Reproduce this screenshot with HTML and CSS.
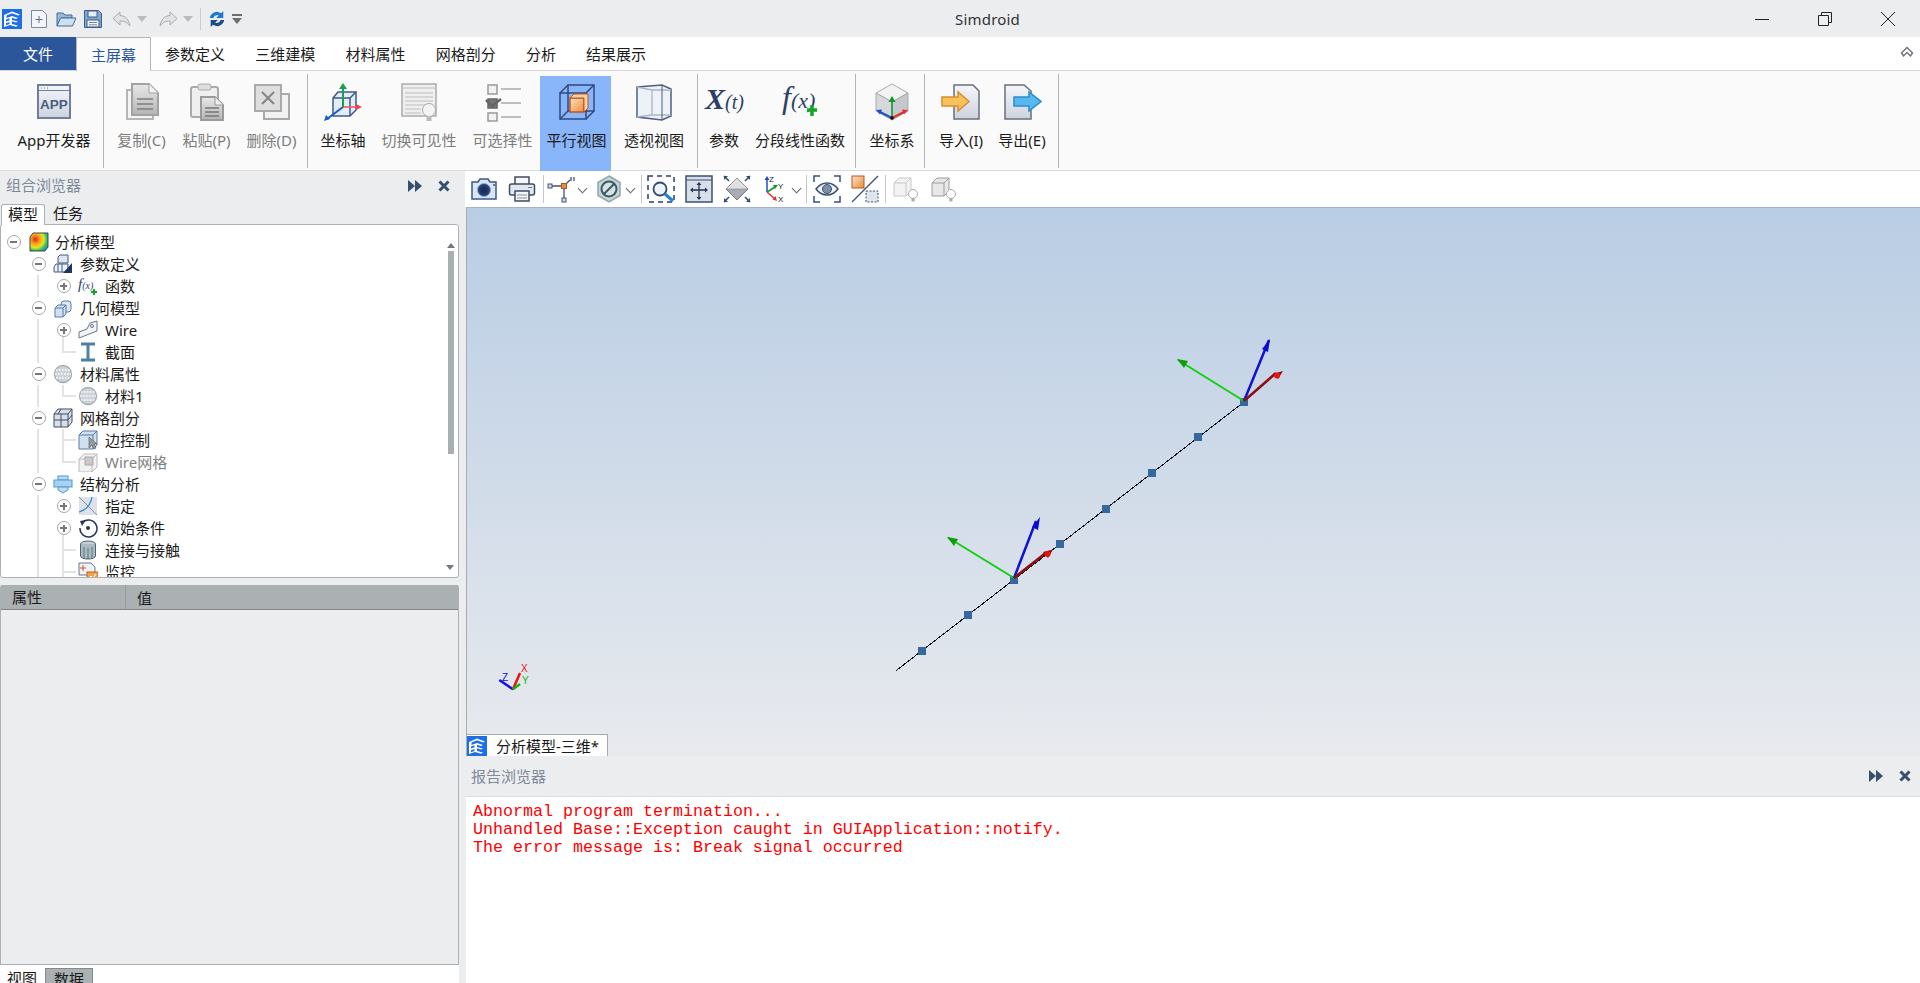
FILE: index.html
```html
<!DOCTYPE html>
<html lang="zh-CN">
<head>
<meta charset="utf-8">
<title>Simdroid</title>
<link rel="stylesheet" href="styles.css">
</head>
<body>
<svg class="defs" aria-hidden="true">
  <defs>
    <linearGradient id="gSheet" x1="0" y1="0" x2="0" y2="1"><stop offset="0" stop-color="#f4f6fa"/><stop offset="1" stop-color="#cdd3de"/></linearGradient>
    <linearGradient id="gGrey" x1="0" y1="0" x2="0" y2="1"><stop offset="0" stop-color="#e8e8e8"/><stop offset="1" stop-color="#b4b4b4"/></linearGradient>
    <linearGradient id="gOrange" x1="0" y1="0" x2="1" y2="1"><stop offset="0" stop-color="#fbe3c4"/><stop offset="1" stop-color="#ec8b3c"/></linearGradient>
    <radialGradient id="gHeat" cx="0.3" cy="0.35" r="0.85"><stop offset="0" stop-color="#e8201c"/><stop offset="0.3" stop-color="#f7a11a"/><stop offset="0.55" stop-color="#e5e51e"/><stop offset="0.75" stop-color="#2fc45a"/><stop offset="1" stop-color="#1f7fe0"/></radialGradient>
    <symbol id="logo" viewBox="0 0 20 20"><rect width="20" height="20" fill="#1e6fe3"/><path d="M2 6 10 2.500l8 3-2 1-6-2.200-5.500 2.200V9l5.500-2 6 2-2 1-4-1.300V11l6 1.500-2 1-4-1.200V15l6 1.500-2 1.200-6-1.700-6 2V6zm2 4.500v2l3.500-1.200v-2zm0 3.800v2l3.500-1.200v-2z" fill="#fff"/></symbol>
    <symbol id="q-new" viewBox="0 0 20 20"><path d="M2.500 1.500h11l4 4v13h-15z" fill="#f3f5f9" stroke="#7b8aa3"/><path d="M10 7v7M6.500 10.500h7" stroke="#5f6f88" fill="none"/></symbol>
    <symbol id="q-open" viewBox="0 0 20 20"><path d="M1 17V4h6l2 2h7v3H5L1 17z" fill="#9ab8d8" stroke="#3f6e9c"/><path d="M1 17 4.500 9H20l-3.500 8z" fill="#cfe0f1" stroke="#3f6e9c"/></symbol>
    <symbol id="q-save" viewBox="0 0 20 20"><path d="M1.500 1.500h14l3 3v14h-17z" fill="#7fa8cf" stroke="#3f5f86"/><rect x="5" y="2" width="9" height="6" fill="#e6edf5" stroke="#3f5f86"/><rect x="4" y="11" width="12" height="7" fill="#f2f4f7" stroke="#3f5f86"/><path d="M6 13.500h8M6 15.800h8" stroke="#7b8aa3"/></symbol>
    <symbol id="q-undo" viewBox="0 0 20 20"><path d="M8 3 1 9.500 8 16v-4c4 0 7 1 10 5-1-6-4-10-10-10.500z" fill="#e2e3e6" stroke="#a8abb0"/></symbol>
    <symbol id="q-redo" viewBox="0 0 20 20"><path d="M12 3l7 6.500L12 16v-4c-4 0-7 1-10 5 1-6 4-10 10-10.500z" fill="#e2e3e6" stroke="#a8abb0"/></symbol>
    <symbol id="q-sync" viewBox="0 0 20 20"><path d="M2 9a8 8 0 0 1 12.500-5.500L17 1v8H9l3-3A4.500 4.500 0 0 0 6 9z" fill="#1c78d0"/><path d="M18 11a8 8 0 0 1-12.500 5.500L3 19v-8h8l-3 3a4.500 4.500 0 0 0 6-3z" fill="#1f4c86"/></symbol>

    <symbol id="r-app" viewBox="0 0 40 40"><rect x="4" y="3" width="32" height="33" fill="url(#gSheet)" stroke="#6f7e99" stroke-width="2"/><path d="M4 8.500h32" stroke="#6f7e99"/><path d="M7 6h1M10 6h1M13 6h1" stroke="#6f7e99"/><text x="20" y="27" class="svg-app">APP</text></symbol>
    <symbol id="r-copy" viewBox="0 0 40 40"><rect x="5" y="8" width="26" height="29" fill="#f4f4f4" stroke="#b5b5b5" stroke-width="2"/><path d="M10 2h17l9 9v22H10z" fill="url(#gGrey)" stroke="#a2a2a2" stroke-width="2"/><path d="M27 2v9h9" fill="#f2f2f2" stroke="#a2a2a2"/><path d="M15 17h16M15 22h16M15 27h16" stroke="#7d7d7d" stroke-width="1.500"/></symbol>
    <symbol id="r-paste" viewBox="0 0 40 40"><rect x="4" y="5" width="27" height="30" rx="2" fill="#efefef" stroke="#aaa" stroke-width="2"/><rect x="11" y="2" width="13" height="6" rx="2" fill="#ddd" stroke="#aaa"/><path d="M14 15h14l8 8v15H14z" fill="url(#gGrey)" stroke="#9a9a9a" stroke-width="2"/><path d="M28 15v8h8" fill="#eee" stroke="#9a9a9a"/><path d="M18 26h14M18 30h14M18 34h14" stroke="#777" stroke-width="1.300"/></symbol>
    <symbol id="r-del" viewBox="0 0 40 40"><rect x="12" y="12" width="25" height="25" fill="#f2f2f2" stroke="#aaa" stroke-width="2"/><rect x="3" y="3" width="26" height="26" fill="#dedede" stroke="#aaa" stroke-width="2"/><path d="M10 10l12 12M22 10 10 22" stroke="#858585" stroke-width="2"/></symbol>
    <symbol id="r-axis" viewBox="0 0 40 40"><path d="M10 16l5-6h18v18l-6 6H10z" fill="#e4ecf6" stroke="#3d5a8a" stroke-width="1.500"/><path d="M10 16h17v18M27 16l6-6" fill="none" stroke="#3d5a8a" stroke-width="1.500"/><path d="M20 25 4 37" stroke="#1d5bc9" stroke-width="2"/><path d="M1 39l2-6 4 4z" fill="#1d5bc9"/><path d="M20 25h14" stroke="#ee5555" stroke-width="1.500"/><path d="M39 25l-6-3v6z" fill="#ee4444"/><path d="M20 25V7" stroke="#16a04a" stroke-width="2"/><path d="M20 1l-4 6h8z" fill="#16a04a"/></symbol>
    <symbol id="r-vis" viewBox="0 0 40 40"><rect x="3" y="2" width="34" height="32" fill="#efefef" stroke="#aaa" stroke-width="1.500"/><path d="M3 6h34M6 11h28M6 15h28M6 19h28M6 23h20M6 27h16M6 31h16" stroke="#bdbdbd"/><circle cx="30" cy="28" r="6.500" fill="#f4f4f4" stroke="#aaa"/><rect x="27.500" y="34" width="5" height="5" fill="#bbb"/></symbol>
    <symbol id="r-sel" viewBox="0 0 40 40"><rect x="5" y="3" width="9" height="9" fill="#f2f2f2" stroke="#999" stroke-width="1.500"/><rect x="5" y="17" width="9" height="9" fill="#777" stroke="#666" stroke-width="1.500"/><rect x="5" y="31" width="9" height="8" fill="#f2f2f2" stroke="#999" stroke-width="1.500"/><path d="M18 7h20M18 21h20M18 35h20" stroke="#aaa" stroke-width="1.500"/><path d="M3 18l6 6 9-7" fill="none" stroke="#666" stroke-width="2.500"/></symbol>
    <symbol id="r-par" viewBox="0 0 40 40"><rect x="11" y="3" width="26" height="26" fill="none" stroke="#2f4a78" stroke-width="1.500"/><rect x="3" y="11" width="26" height="26" fill="none" stroke="#2f4a78" stroke-width="1.500"/><path d="M3 11l8-8M29 11l8-8M29 37l8-8M3 37l8-8" stroke="#2f4a78" stroke-width="1.500"/><rect x="13" y="16" width="14" height="14" fill="url(#gOrange)" stroke="#c3541f" stroke-width="1.500"/><path d="M13 16l4-4h14v14l-4 4V16z" fill="#f8d3a6" stroke="#c3541f"/></symbol>
    <symbol id="r-per" viewBox="0 0 40 40"><path d="M3 5l25-2 9 4v27l-9 4-25-3z" fill="#eef1f6" stroke="#4d6080" stroke-width="1.500"/><path d="M3 5l15 3h19M18 8v25M3 35l15-2h19" fill="none" stroke="#a9b5c8" stroke-width="1.300"/><path d="M28 3v35" stroke="#4d6080"/></symbol>
    <symbol id="r-xt" viewBox="0 0 40 40"><text x="1" y="27" class="svg-x">X<tspan class="svg-xs">(t)</tspan></text></symbol>
    <symbol id="r-fx" viewBox="0 0 40 40"><text x="2" y="26" class="svg-f">f<tspan class="svg-fs">(x)</tspan></text><path d="M27 28h10M32 23v11" stroke="#12a626" stroke-width="3.500"/></symbol>
    <symbol id="r-coord" viewBox="0 0 40 40"><path d="M20 2 36 11 20 20 4 11z" fill="#f3f3f3" stroke="#aaa"/><path d="M4 11 20 20v18L4 29z" fill="#d6d8db" stroke="#aaa"/><path d="M36 11 20 20v18l16-9z" fill="#c4c7cc" stroke="#aaa"/><path d="M20 36V18" stroke="#0d9a2c" stroke-width="1.500"/><path d="M20 14l-3.500 6h7z" fill="#0d9a2c"/><path d="M20 36 8 30" stroke="#1d4fc4" stroke-width="2"/><path d="M4 28l6-.500-2 5z" fill="#1d4fc4"/><path d="M20 36l12-6" stroke="#e23030" stroke-width="2"/><path d="M36 28l-6-.500 2 5z" fill="#e23030"/><circle cx="20" cy="36" r="1.800" fill="#111"/></symbol>
    <symbol id="r-imp" viewBox="0 0 40 40"><path d="M13 3h19l6 6v28H13z" fill="url(#gSheet)" stroke="#6a6f78" stroke-width="1.500"/><path d="M1 15h16v-5l11 9.500L17 29v-5H1z" fill="#f7c25c" stroke="#d78f2d" stroke-width="1.500"/></symbol>
    <symbol id="r-exp" viewBox="0 0 40 40"><path d="M3 3h19l7 6v28H3z" fill="url(#gSheet)" stroke="#6a6f78" stroke-width="1.500"/><path d="M12 15h15v-5l12 9.500L27 29v-5H12z" fill="#56b8ec" stroke="#2b8ccc" stroke-width="1.500"/></symbol>

    <symbol id="t-cam" viewBox="0 0 28 28"><path d="M2 7h6l2-3h8l2 3h6v17H2z" fill="#dbe4f0" stroke="#3a5a88" stroke-width="1.500"/><circle cx="14" cy="15" r="6.500" fill="#1f3f78" stroke="#8fa6c6"/><circle cx="14" cy="15" r="3.500" fill="#1c2f5c"/><circle cx="24" cy="10" r="1" fill="#3a5a88"/></symbol>
    <symbol id="t-print" viewBox="0 0 28 28"><rect x="7" y="2" width="14" height="9" fill="#f5f6f8" stroke="#3f4c63" stroke-width="1.500"/><rect x="1.500" y="9" width="25" height="11" rx="2" fill="#e2e6ed" stroke="#3f4c63" stroke-width="1.500"/><rect x="7" y="16" width="14" height="10" fill="#f5f6f8" stroke="#3f4c63" stroke-width="1.500"/><path d="M9 20h10M9 23h10" stroke="#8993a3"/><path d="M20 12.500h4" stroke="#6b7687"/></symbol>
    <symbol id="t-node" viewBox="0 0 28 28"><path d="M3 11h14v14M17 11l6-6" fill="none" stroke="#3f5272" stroke-width="1.300"/><path d="M24 2v4M27 2v4" stroke="#3f5272" stroke-width="1.300"/><rect x="1" y="9" width="4" height="4" fill="#d5dce8" stroke="#3f5272"/><rect x="15" y="23" width="4" height="4" fill="#d5dce8" stroke="#3f5272"/><rect x="14.500" y="8.500" width="5" height="5" fill="#ec8b3c" stroke="#a85a20"/></symbol>
    <symbol id="t-stop" viewBox="0 0 28 28"><path d="M14 1 25 7.500v13L14 27 3 20.500v-13z" fill="#c7d6d8" stroke="#8fa6aa" stroke-width="1.500"/><circle cx="14" cy="14" r="7.500" fill="#d9e2e3" stroke="#3c5a62" stroke-width="2"/><path d="M9 19 19 9" stroke="#3c5a62" stroke-width="2"/></symbol>
    <symbol id="t-zoom" viewBox="0 0 28 28"><rect x="1" y="1" width="26" height="26" fill="none" stroke="#2a3f66" stroke-width="1.500" stroke-dasharray="5 4"/><circle cx="13" cy="14" r="6.500" fill="#eef3fa" stroke="#2f4a78" stroke-width="1.800"/><path d="M18 19l8 7" stroke="#1f84d6" stroke-width="3"/></symbol>
    <symbol id="t-fit" viewBox="0 0 28 28"><rect x="1" y="1" width="26" height="26" fill="#d9dfe9" stroke="#3a5073" stroke-width="1.500"/><path d="M1 5h26" stroke="#3a5073"/><path d="M14 8v16M6 15h16" stroke="#22355a" stroke-width="1.300"/><path d="M14 7l-2.500 3h5zM14 25l-2.500-3h5zM5 15l3-2.500v5zM23 15l-3-2.500v5z" fill="#22355a"/></symbol>
    <symbol id="t-dia" viewBox="0 0 28 28"><path d="M14 3 25 14 14 25 3 14z" fill="#a9acb2" stroke="#777"/><path d="M14 3 25 14H3z" fill="#dfe0e3" stroke="#777" stroke-width=".5"/><path d="M1 1l5 5M27 1l-5 5M1 27l5-5M27 27l-5-5" stroke="#2f4a78" stroke-width="1.500"/><path d="M1 1h4L1 5zM27 1h-4l4 4zM1 27h4l-4-4zM27 27h-4l4-4z" fill="#2f4a78"/></symbol>
    <symbol id="t-xyz" viewBox="0 0 28 28"><path d="M6 17V4" stroke="#1d4fc4" stroke-width="1.500"/><path d="M6 1 3.500 5h5z" fill="#1d4fc4"/><path d="M6 17l8-5" stroke="#0d9a2c" stroke-width="1.500"/><path d="M17 10l-5 0 2 4z" fill="#0d9a2c"/><path d="M6 17l8 7" stroke="#e23030" stroke-width="1.500"/><path d="M16 26l-1.500-5-3 3.500z" fill="#e23030"/><text x="8" y="7" class="svg-axis">Z</text><text x="17" y="14" class="svg-axis">Y</text><text x="17" y="27" class="svg-axis">X</text></symbol>
    <symbol id="t-eye" viewBox="0 0 28 28"><path d="M1 7V1h6M21 1h6v6M27 21v6h-6M7 27H1v-6" fill="none" stroke="#3a5073" stroke-width="1.500"/><path d="M3 14c6-8 16-8 22 0-6 8-16 8-22 0z" fill="#eef2f7" stroke="#3a5073" stroke-width="1.500"/><circle cx="14" cy="14" r="4.500" fill="#7f8fa7" stroke="#3a5073"/></symbol>
    <symbol id="t-sec" viewBox="0 0 28 28"><rect x="1" y="1" width="12" height="12" fill="url(#gOrange)" stroke="#b5562a"/><rect x="15" y="16" width="12" height="11" fill="#dfe5ee" stroke="#3a5073" stroke-dasharray="2 1.500"/><path d="M1 27 27 1" stroke="#3a5073" stroke-width="1.300"/></symbol>
    <symbol id="t-c1" viewBox="0 0 28 28"><path d="M2 8l5-5h12v13l-5 5H2z" fill="#f3f3f3" stroke="#c8c8c8"/><path d="M2 8h12v13M14 8l5-5" fill="none" stroke="#c8c8c8"/><circle cx="21" cy="19" r="4.500" fill="#fff" stroke="#aaa"/><rect x="19.500" y="23" width="3" height="3.500" fill="#aaa"/></symbol>
    <symbol id="t-c2" viewBox="0 0 28 28"><path d="M2 8l5-5h12v13l-5 5H2z" fill="#e8e8e8" stroke="#9c9c9c"/><path d="M2 8h12v13M14 8l5-5" fill="none" stroke="#9c9c9c"/><circle cx="21" cy="19" r="4.500" fill="#fff" stroke="#aaa"/><rect x="19.500" y="23" width="3" height="3.500" fill="#aaa"/></symbol>

    <symbol id="n-heat" viewBox="0 0 20 20"><path d="M4 1h15v14l-3 4H1V5z" fill="url(#gHeat)" stroke="#445"/></symbol>
    <symbol id="n-par" viewBox="0 0 20 20"><path d="M5 3l2-2h8v8H5z" fill="#dce7f3" stroke="#3f5a82"/><path d="M1 13l2-3h12v8H1z" fill="#eef2f7" stroke="#3f5a82"/><path d="M5 10v8M9 10v8" stroke="#3f5a82"/><path d="M19 9v10h-9z" fill="#1f3563"/></symbol>
    <symbol id="n-fx" viewBox="0 0 20 20"><text x="0" y="13" class="svg-nf">f<tspan class="svg-nfs">(x)</tspan></text><path d="M13 16h6M16 13v6" stroke="#12a626" stroke-width="2"/></symbol>
    <symbol id="n-geo" viewBox="0 0 20 20"><rect x="8" y="3" width="10" height="11" rx="3" fill="#dce7f3" stroke="#5a7aa3"/><path d="M2 10l3-3h8v9l-3 3H2z" fill="#cfe0f1" stroke="#5a7aa3"/><path d="M2 10h8v9M10 10l3-3" fill="none" stroke="#5a7aa3"/></symbol>
    <symbol id="n-wire" viewBox="0 0 20 20"><path d="M1 12l8-3 3-6 7-2v10L1 18z" fill="#f1f3f6" stroke="#6a7687"/><circle cx="14" cy="6" r="1.500" fill="none" stroke="#6a7687"/></symbol>
    <symbol id="n-beam" viewBox="0 0 20 20"><path d="M3 2h14M3 18h14M10 3v14" stroke="#4d7fa3" stroke-width="3"/></symbol>
    <symbol id="n-mat" viewBox="0 0 20 20"><circle cx="10" cy="10" r="8.500" fill="#cfd3d9" stroke="#a5abb3" stroke-width="1.300"/><path d="M3 6h14M2 10h16M3 14h14" stroke="#fff" stroke-width="1.500" stroke-dasharray="1.500 1.500"/></symbol>
    <symbol id="n-mesh" viewBox="0 0 20 20"><path d="M1 6l4-5h14v13l-4 5H1z" fill="#d9dee7" stroke="#3f4f68"/><path d="M1 6h14v13M15 6l4-5M8 1 5 6M8 6v13M1 12h14M15 12l4-5" fill="none" stroke="#3f4f68"/></symbol>
    <symbol id="n-edge" viewBox="0 0 20 20"><path d="M1 5l4-4h14v14l-4 4H1z" fill="#cfe0f3" stroke="#5a7aa3"/><path d="M1 5h14v14M15 5l4-4" fill="none" stroke="#5a7aa3"/><path d="M11 7v11l3-3 2 4 2-1-2-4h3z" fill="#9a9a9a" stroke="#555" stroke-width=".6"/></symbol>
    <symbol id="n-wm" viewBox="0 0 20 20"><path d="M1 7l5-5h13v13l-5 5H1z" fill="#f2f2f2" stroke="#bbb"/><path d="M1 7h13v13M14 7l5-5" fill="none" stroke="#bbb"/><rect x="7" y="5" width="8" height="8" fill="#c9c9c9" stroke="#aaa"/></symbol>
    <symbol id="n-str" viewBox="0 0 20 20"><rect x="5" y="2" width="10" height="4" fill="#bddcf3" stroke="#4d9ad0"/><rect x="1" y="6" width="18" height="7" fill="#a8d2f0" stroke="#4d9ad0"/><path d="M5 13h10v3l-5 3-5-3z" fill="#bddcf3" stroke="#4d9ad0"/></symbol>
    <symbol id="n-asg" viewBox="0 0 20 20"><rect x="1" y="1" width="18" height="18" fill="#dde1e9"/><path d="M1 1l18 18" stroke="#8a92a0"/><path d="M1 16c3-1 11-3 13-15" fill="none" stroke="#3a8ccc" stroke-width="1.300"/></symbol>
    <symbol id="n-init" viewBox="0 0 20 20"><path d="M4 5a8.500 8.500 0 1 1-2 5" fill="none" stroke="#26365c" stroke-width="1.500"/><path d="M8 2 2 3l2 5z" fill="#26365c"/><circle cx="10" cy="10" r="2" fill="#26365c"/></symbol>
    <symbol id="n-con" viewBox="0 0 20 20"><ellipse cx="10" cy="4" rx="7.500" ry="3" fill="#c3d0d6" stroke="#4d6672"/><path d="M2.500 4v12c0 4 15 4 15 0V4" fill="#a9bac2" stroke="#4d6672"/><path d="M6 7v11M10 8v11M14 7v11" stroke="#4d6672" stroke-width=".8"/></symbol>
    <symbol id="n-mon" viewBox="0 0 20 20"><path d="M1 1h12l4 4v8H1z" fill="#eef1f6" stroke="#6a7687"/><path d="M5 3v6M2 6h6" stroke="#d2542a"/><rect x="9" y="10" width="11" height="9" fill="#f0a050" stroke="#c3641f"/><path d="M10 17l3-3 2 2 3-4" fill="none" stroke="#fff"/></symbol>

    <symbol id="d-more" viewBox="0 0 14 14"><path d="M0 1 7 7 0 13zM7 1l7 6-7 6z" fill="#33506f"/></symbol>
    <symbol id="d-close" viewBox="0 0 14 14"><path d="M2.500 2.500l9 9M11.500 2.500l-9 9" stroke="#33506f" stroke-width="3"/></symbol>
  </defs>
</svg>

<header class="titlebar">
  <div class="qat">
    <svg class="qi"><use href="#logo"/></svg>
    <svg class="qi"><use href="#q-new"/></svg>
    <svg class="qi"><use href="#q-open"/></svg>
    <svg class="qi"><use href="#q-save"/></svg>
    <svg class="qi qi-undo"><use href="#q-undo"/></svg>
    <span class="tri"></span>
    <svg class="qi qi-redo"><use href="#q-redo"/></svg>
    <span class="tri"></span>
    <span class="qsep"></span>
    <svg class="qi qi-sync"><use href="#q-sync"/></svg>
    <span class="qmenu"></span>
  </div>
  <div class="apptitle">Simdroid</div>
  <div class="winctl">
    <svg class="wi" viewBox="0 0 14 14"><path d="M0 7.500h14" stroke="#222" fill="none"/></svg>
    <svg class="wi" viewBox="0 0 14 14"><path d="M3.500 3.500V.5h10v10h-3M.5 3.500h10v10H.5z" stroke="#222" fill="none"/></svg>
    <svg class="wi" viewBox="0 0 14 14"><path d="M0 0l14 14M14 0 0 14" stroke="#222" fill="none"/></svg>
  </div>
</header>

<nav class="tabbar">
  <div class="tab-file">文件</div>
  <div class="tab tab-on">主屏幕</div>
  <div class="tab">参数定义</div>
  <div class="tab">三维建模</div>
  <div class="tab">材料属性</div>
  <div class="tab">网格剖分</div>
  <div class="tab">分析</div>
  <div class="tab">结果展示</div>
  <svg class="collapse" viewBox="0 0 14 12"><path d="M1.500 7 7 1.500 12.500 7 10.500 10 7 6.500 3.500 10z" fill="none" stroke="#6b7078" stroke-width="1.400"/></svg>
</nav>

<section class="ribbon">
  <div class="rgroup g1">
    <div class="rbtn w96"><svg class="ric"><use href="#r-app"/></svg><span>App开发器</span></div>
  </div>
  <div class="rgroup g2">
    <div class="rbtn w65 off"><svg class="ric"><use href="#r-copy"/></svg><span>复制(C)</span></div>
    <div class="rbtn w65 off"><svg class="ric"><use href="#r-paste"/></svg><span>粘贴(P)</span></div>
    <div class="rbtn w65 off"><svg class="ric"><use href="#r-del"/></svg><span>删除(D)</span></div>
  </div>
  <div class="rgroup g3">
    <div class="rbtn w60"><svg class="ric"><use href="#r-axis"/></svg><span>坐标轴</span></div>
    <div class="rbtn w92 off"><svg class="ric"><use href="#r-vis"/></svg><span>切换可见性</span></div>
    <div class="rbtn w75 off"><svg class="ric"><use href="#r-sel"/></svg><span>可选择性</span></div>
    <div class="rbtn w71 on"><svg class="ric"><use href="#r-par"/></svg><span>平行视图</span></div>
    <div class="rbtn w86"><svg class="ric"><use href="#r-per"/></svg><span>透视视图</span></div>
  </div>
  <div class="rgroup g4">
    <div class="rbtn w52"><svg class="ric"><use href="#r-xt"/></svg><span>参数</span></div>
    <div class="rbtn w100"><svg class="ric"><use href="#r-fx"/></svg><span>分段线性函数</span></div>
  </div>
  <div class="rgroup g5">
    <div class="rbtn w60"><svg class="ric"><use href="#r-coord"/></svg><span>坐标系</span></div>
  </div>
  <div class="rgroup g6">
    <div class="rbtn w60"><svg class="ric"><use href="#r-imp"/></svg><span>导入(I)</span></div>
    <div class="rbtn w62"><svg class="ric"><use href="#r-exp"/></svg><span>导出(E)</span></div>
  </div>
</section>

<main class="workspace">
  <aside class="leftcol">
    <div class="dockhead">
      <span class="docktitle dt-left">组合浏览器</span>
      <svg class="dicon"><use href="#d-more"/></svg>
      <svg class="dicon dclose"><use href="#d-close"/></svg>
    </div>
    <div class="lefttabs">
      <span class="ltab ltab-on">模型</span>
      <span class="ltab">任务</span>
    </div>
    <div class="treebox">
      <div class="tree">
        <div class="row"><span class="cell"><i class="exp"></i></span><svg class="nic nic0"><use href="#n-heat"/></svg><span class="lbl">分析模型</span></div>
        <div class="row"><span class="cell"></span><span class="cell"><i class="exp"></i></span><svg class="nic"><use href="#n-par"/></svg><span class="lbl">参数定义</span></div>
        <div class="row"><span class="cell"></span><span class="cell v"></span><span class="cell"><i class="exp plus"></i></span><svg class="nic"><use href="#n-fx"/></svg><span class="lbl">函数</span></div>
        <div class="row"><span class="cell"></span><span class="cell"><i class="exp"></i></span><svg class="nic"><use href="#n-geo"/></svg><span class="lbl">几何模型</span></div>
        <div class="row"><span class="cell"></span><span class="cell v"></span><span class="cell vd"><i class="exp plus"></i></span><svg class="nic"><use href="#n-wire"/></svg><span class="lbl">Wire</span></div>
        <div class="row"><span class="cell"></span><span class="cell v"></span><span class="cell l"></span><svg class="nic"><use href="#n-beam"/></svg><span class="lbl">截面</span></div>
        <div class="row"><span class="cell"></span><span class="cell"><i class="exp"></i></span><svg class="nic"><use href="#n-mat"/></svg><span class="lbl">材料属性</span></div>
        <div class="row"><span class="cell"></span><span class="cell v"></span><span class="cell l"></span><svg class="nic"><use href="#n-mat"/></svg><span class="lbl">材料1</span></div>
        <div class="row"><span class="cell"></span><span class="cell"><i class="exp"></i></span><svg class="nic"><use href="#n-mesh"/></svg><span class="lbl">网格剖分</span></div>
        <div class="row"><span class="cell"></span><span class="cell v"></span><span class="cell t"></span><svg class="nic"><use href="#n-edge"/></svg><span class="lbl">边控制</span></div>
        <div class="row"><span class="cell"></span><span class="cell v"></span><span class="cell l"></span><svg class="nic"><use href="#n-wm"/></svg><span class="lbl lbl-off">Wire网格</span></div>
        <div class="row"><span class="cell"></span><span class="cell"><i class="exp"></i></span><svg class="nic"><use href="#n-str"/></svg><span class="lbl">结构分析</span></div>
        <div class="row"><span class="cell"></span><span class="cell v"></span><span class="cell"><i class="exp plus"></i></span><svg class="nic"><use href="#n-asg"/></svg><span class="lbl">指定</span></div>
        <div class="row"><span class="cell"></span><span class="cell v"></span><span class="cell vd"><i class="exp plus"></i></span><svg class="nic"><use href="#n-init"/></svg><span class="lbl">初始条件</span></div>
        <div class="row"><span class="cell"></span><span class="cell v"></span><span class="cell t"></span><svg class="nic"><use href="#n-con"/></svg><span class="lbl">连接与接触</span></div>
        <div class="row"><span class="cell"></span><span class="cell v"></span><span class="cell t"></span><svg class="nic"><use href="#n-mon"/></svg><span class="lbl">监控</span></div>
      </div>
      <div class="scroll">
        <span class="sc-up"></span>
        <span class="sc-thumb"></span>
        <span class="sc-down"></span>
      </div>
    </div>
    <div class="props">
      <div class="prophead"><span class="pcol1">属性</span><span class="pcol2">值</span></div>
      <div class="propbody"></div>
    </div>
    <div class="bottomtabs">
      <span class="btab">视图</span>
      <span class="btab btab-on">数据</span>
    </div>
  </aside>

  <div class="rightcol">
    <div class="viewbar">
      <svg class="tool m0"><use href="#t-cam"/></svg>
      <svg class="tool"><use href="#t-print"/></svg>
      <span class="vsep m7"></span>
      <svg class="tool m3"><use href="#t-node"/></svg>
      <span class="chev"></span>
      <svg class="tool m6"><use href="#t-stop"/></svg>
      <span class="chev"></span>
      <span class="vsep m4"></span>
      <svg class="tool m5"><use href="#t-zoom"/></svg>
      <svg class="tool"><use href="#t-fit"/></svg>
      <svg class="tool"><use href="#t-dia"/></svg>
      <svg class="tool"><use href="#t-xyz"/></svg>
      <span class="chev"></span>
      <span class="vsep m3"></span>
      <svg class="tool m6"><use href="#t-eye"/></svg>
      <svg class="tool"><use href="#t-sec"/></svg>
      <span class="vsep m6"></span>
      <svg class="tool m6"><use href="#t-c1"/></svg>
      <svg class="tool"><use href="#t-c2"/></svg>
    </div>

    <div class="viewport">
      <svg class="scene" viewBox="466 207 1454 549">
        <path class="jag" d="M896 670.700 1244 402" stroke="#111" stroke-width="1" fill="none"/>
        <g fill="#35689d">
          <rect x="918" y="647" width="8" height="8"/>
          <rect x="964" y="611" width="8" height="8"/>
          <rect x="1010" y="576" width="8" height="8"/>
          <rect x="1056" y="540" width="8" height="8"/>
          <rect x="1102" y="505" width="8" height="8"/>
          <rect x="1148" y="469" width="8" height="8"/>
          <rect x="1194" y="433" width="8" height="8"/>
          <rect x="1240" y="398" width="8" height="8"/>
        </g>
        <g fill="none">
          <path d="M1014 578 948 537.500" stroke="#10d010" stroke-width="2"/>
          <path d="M1014 578 1036 521" stroke="#1111d0" stroke-width="2.500"/>
          <path d="M1014 578 1045 553.500" stroke="#8c1010" stroke-width="2.500"/>
          <path d="M1244 401 1178 360" stroke="#10d010" stroke-width="2"/>
          <path d="M1244 401 1269 340" stroke="#1111d0" stroke-width="2.500"/>
          <path d="M1244 401 1276 373" stroke="#8c1010" stroke-width="2.500"/>
        </g>
        <path d="M947 537 958 539 954 546z" fill="#0f9c0f"/>
        <path d="M1040 517 1032 527 1038 530z" fill="#0a0ad0"/>
        <path d="M1053 549.500 1043 552 1048 558z" fill="#801010"/>
        <circle cx="1047.500" cy="554" r="3" fill="#ee1111"/>
        <path d="M1177 359 1188 361 1184 368z" fill="#0f9c0f"/>
        <path d="M1270 339 1262 349 1268 352z" fill="#0a0ad0"/>
        <path d="M1283 371 1273 374 1278 379z" fill="#801010"/>
        <circle cx="1277" cy="375.500" r="3" fill="#ee1111"/>
        <path d="M513 689.300 499.300 680" stroke="#1010ee" stroke-width="2.500"/>
        <path d="M513 689.300 520 673" stroke="#ee1010" stroke-width="2.500"/>
        <path d="M513 689.300 520 684" stroke="#14b814" stroke-width="2.500"/>
        <text x="502" y="681" class="tz">Z</text>
        <text x="521" y="672" class="tx">X</text>
        <text x="522" y="684" class="ty">Y</text>
      </svg>
      <div class="doctab"><svg class="doclogo"><use href="#logo"/></svg><span>分析模型-三维*</span></div>
    </div>

    <section class="report">
      <div class="rephead">
        <span class="docktitle dt-right">报告浏览器</span>
        <svg class="dicon"><use href="#d-more"/></svg>
        <svg class="dicon dclose"><use href="#d-close"/></svg>
      </div>
      <pre class="replog">Abnormal program termination...
Unhandled Base::Exception caught in GUIApplication::notify.
The error message is: Break signal occurred</pre>
    </section>
  </div>
</main>
</body>
</html>
```

FILE: styles.css
```css
* { box-sizing: border-box; }
html, body { margin: 0; height: 100%; }
body {
  width: 1920px;
  height: 983px;
  overflow: hidden;
  background: #ecedef;
  color: #1a1a1a;
  font-family: "Noto Sans", "Noto Sans CJK SC", sans-serif;
  font-size: 15px;
  display: flex;
  flex-direction: column;
}
.defs { position: absolute; width: 0; height: 0; }
.svg-app { font: bold 13.5px "Liberation Sans", sans-serif; fill: #4a5d7e; text-anchor: middle; }
.svg-x { font: italic bold 30px "Liberation Serif", serif; fill: #2c3f66; }
.svg-xs { font-size: 20px; font-weight: normal; }
.svg-f { font: italic 32px "Liberation Serif", serif; fill: #2c3f66; }
.svg-fs { font-size: 22px; }
.svg-nf { font: italic 15px "Liberation Serif", serif; fill: #2c3f66; }
.svg-nfs { font-size: 10px; }
.svg-axis { font: 8px "Liberation Sans", sans-serif; fill: #222; }

/* title bar */
.titlebar { height: 37px; flex: none; display: flex; align-items: center; background: #ecedef; }
.qat { width: 231px; flex: none; display: flex; align-items: center; padding-left: 2px; }
.qi { width: 20px; height: 20px; margin-right: 7px; flex: none; }
.qi-undo { margin-left: 2px; margin-right: 5px; }
.qi-redo { margin-left: 11px; margin-right: 5px; }
.qi-sync { width: 18px; height: 18px; margin: 0 6px 0 7px; }
.tri { width: 0; height: 0; border: 5px solid transparent; border-top: 6px solid #b9bcc0; border-bottom: 0; flex: none; }
.qsep { width: 1px; height: 22px; background: #c9cbce; margin-left: 7px; flex: none; }
.qmenu { width: 10px; height: 9px; flex: none; border-top: 2px solid #6b6f75; position: relative; }
.qmenu::after { content: ""; position: absolute; left: 0; top: 2px; border: 5px solid transparent; border-top: 6px solid #6b6f75; border-bottom: 0; }
.apptitle { margin-left: 724px; font-size: 15px; letter-spacing: .2px; color: #333; }
.winctl { margin-left: auto; display: flex; gap: 49px; padding-right: 25px; }
.wi { width: 14px; height: 14px; display: block; }

/* tabs */
.tabbar { height: 34px; flex: none; display: flex; align-items: stretch; background: #fff; border-bottom: 1px solid #d4d5d7; position: relative; }
.tab-file { width: 76px; background: #2b579a; color: #fff; display: flex; align-items: center; justify-content: center; }
.tab { padding: 0 15.1px; display: flex; align-items: center; }
.tab-on { margin: 0 0 -1px 0; width: 75px; justify-content: center; padding: 0; border: 1px solid #b4b6b9; border-bottom: 0; background: #fafafa; color: #2b579a; }
.tab-on + .tab { margin-left: -1px; }
.collapse { width: 14px; height: 12px; margin: 9px 6px 0 auto; }

/* ribbon */
.ribbon { height: 100px; flex: none; display: flex; background: #fafafa; border-bottom: 1px solid #d9dadc; }
.rgroup { display: flex; height: 94px; margin-top: 3px; border-right: 1px solid #b3b4b6; flex: none; }
.g1 { width: 104px; padding-left: 6px; }
.g2 { width: 204px; padding-left: 5px; }
.g3 { width: 390px; padding-left: 5px; }
.g4 { width: 158px; }
.g5 { width: 69px; padding-left: 6px; }
.g6 { width: 134px; padding-left: 6px; }
.rbtn { height: 96px; margin-top: 2px; flex: none; display: flex; flex-direction: column; align-items: center; padding-top: 6px; white-space: nowrap; }
.rbtn span { line-height: 20px; margin-top: 8px; }
.ric { width: 40px; height: 40px; flex: none; }
.off { color: #7d7d7d; }
.on { background: #89b6fb; padding-left: 2px; }
.w52 { width: 52px; } .w60 { width: 60px; } .w62 { width: 62px; } .w65 { width: 65px; }
.w71 { width: 71px; } .w75 { width: 75px; } .w86 { width: 86px; } .w92 { width: 92px; }
.w96 { width: 96px; } .w100 { width: 100px; }

/* workspace */
.workspace { flex: 1; min-height: 0; display: flex; }
.leftcol { width: 465px; flex: none; display: flex; flex-direction: column; }
.dockhead { height: 28px; flex: none; display: flex; align-items: center; width: 459px; padding-left: 6px; margin-top: 1px; }
.docktitle { color: #7c8a9a; flex: 1; }
.dt-left { margin-top: -4px; }
.dt-right { margin-top: -2px; }
.dicon { width: 14px; height: 14px; flex: none; }
.dclose { margin: 0 8px 0 15px; }

.lefttabs { height: 24px; flex: none; display: flex; align-items: flex-end; padding-left: 1px; }
.ltab { height: 20px; line-height: 19px; padding: 0 7px; }
.ltab-on { background: #fff; border: 1px solid #adb1b4; border-bottom: 0; border-radius: 3px 3px 0 0; margin-bottom: -1px; height: 21px; position: relative; z-index: 1; padding: 0 6px; }
.ltab + .ltab { padding-left: 8px; }

.treebox { width: 459px; height: 354px; flex: none; display: flex; background: #fff; border: 1px solid #adb1b4; border-radius: 3px; overflow: hidden; }
.tree { flex: 1; padding-top: 6px; height: 352px; overflow: hidden; }
.row { height: 22px; display: flex; align-items: center; white-space: nowrap; }
.cell { width: 25px; height: 22px; flex: none; position: relative; display: flex; align-items: center; justify-content: center; }
.cell.v::before, .cell.t::before { content: ""; position: absolute; left: 11px; top: 0; bottom: 0; width: 2px; background: #e2e3e4; }
.cell.vd::before { content: ""; position: absolute; left: 11px; top: 18px; bottom: 0; width: 2px; background: #e2e3e4; }
.cell.l::before { content: ""; position: absolute; left: 11px; top: 0; height: 12px; width: 2px; background: #e2e3e4; }
.cell.l::after, .cell.t::after { content: ""; position: absolute; left: 11px; right: 0; top: 10px; height: 2px; background: #e2e3e4; }
.exp { width: 14px; height: 14px; border: 1px solid #a4a7aa; border-radius: 50%; background: #fff; position: relative; display: block; }
.exp::before { content: ""; position: absolute; left: 2.5px; right: 2.5px; top: 5px; height: 2px; background: #777; }
.exp.plus::after { content: ""; position: absolute; top: 2.5px; bottom: 2.5px; left: 5px; width: 2px; background: #777; }
.nic { width: 20px; height: 20px; flex: none; margin: 0 7px 0 2px; }
.nic0 { margin: 0 6px 0 3px; }
.lbl { line-height: 22px; }
.lbl-off { color: #808080; }

.scroll { width: 14px; flex: none; position: relative; display: flex; flex-direction: column; align-items: center; padding-top: 18px; }
.sc-up { width: 0; height: 0; border: 4.5px solid transparent; border-bottom: 5px solid #70797d; border-top: 0; margin-bottom: 3px; }
.sc-thumb { width: 6px; height: 203px; background: #a9aeb1; }
.sc-down { position: absolute; bottom: 7px; left: 2px; width: 0; height: 0; border: 4.5px solid transparent; border-top: 5px solid #70797d; border-bottom: 0; }

.props { width: 459px; height: 380px; margin-top: 7px; flex: none; display: flex; flex-direction: column; border: 1px solid #adb1b4; border-top: 0; border-radius: 3px 3px 0 0; }
.prophead { height: 25px; flex: none; display: flex; align-items: center; background: #abb0b3; border-bottom: 1px solid #7f8588; }
.pcol1 { width: 125px; height: 100%; padding-left: 11px; line-height: 24px; border-right: 1px solid #969ba0; }
.pcol2 { padding-left: 11px; }
.propbody { flex: 1; background: #ecedef; }

.bottomtabs { height: 18px; flex: none; width: 459px; background: #fff; display: flex; overflow: hidden; padding-left: 7px; line-height: 20px; }
.btab { height: 30px; margin-top: 3px; }
.btab-on { margin-left: 8px; padding: 0 8px; background: #abb0b3; border: 1px solid #85898c; }

.rightcol { flex: 1; min-width: 0; display: flex; flex-direction: column; }
.viewbar { height: 36px; flex: none; display: flex; align-items: center; background: #fff; padding-left: 5px; }
.tool { width: 28px; height: 28px; flex: none; margin-left: 10px; }
.tool.m0 { margin-left: 0; }
.tool.m3 { margin-left: 3px; }
.tool.m5 { margin-left: 5px; }
.tool.m6 { margin-left: 6px; }
.vsep { width: 1px; height: 28px; background: #c4c6c9; flex: none; }
.vsep.m3 { margin-left: 3px; }
.vsep.m4 { margin-left: 4px; }
.vsep.m6 { margin-left: 6px; }
.vsep.m7 { margin-left: 7px; }
.chev { width: 14px; flex: none; height: 28px; position: relative; }
.chev::after { content: ""; position: absolute; left: 4px; top: 10px; width: 6px; height: 6px; border-right: 1.3px solid #666; border-bottom: 1.3px solid #666; transform: rotate(45deg); }

.viewport { margin-left: 1px; height: 549px; flex: none; position: relative; display: flex; align-items: flex-end; background: linear-gradient(#b9cde4, #e8eaee); border-top: 1px solid #a4b3c7; border-left: 1px solid #a9aaac; }
.scene { position: absolute; left: -1px; top: -1px; width: 1454px; height: 549px; }
.jag { shape-rendering: crispEdges; }
.tx { font: 10px "Liberation Sans", sans-serif; fill: #ee1010; }
.ty { font: 10px "Liberation Sans", sans-serif; fill: #14b814; }
.tz { font: 10px "Liberation Sans", sans-serif; fill: #1010ee; }
.doctab { position: relative; height: 22px; width: 141px; background: #fff; border: 1px solid #a9aaac; border-left: 0; border-bottom: 0; display: flex; align-items: center; white-space: nowrap; }
.doclogo { width: 20px; height: 20px; flex: none; margin-right: 9px; }

.report { flex: 1; min-height: 0; margin-left: 1px; display: flex; flex-direction: column; background: #ecedef; }
.rephead { height: 40px; flex: none; display: flex; align-items: center; padding-left: 5px; }
.replog { flex: 1; margin: 0; background: #fff; border-top: 1px solid #dcdddf; padding: 6px 0 0 7px; color: #ff0000; font: 16.67px/18px "Liberation Mono", monospace; }
```
